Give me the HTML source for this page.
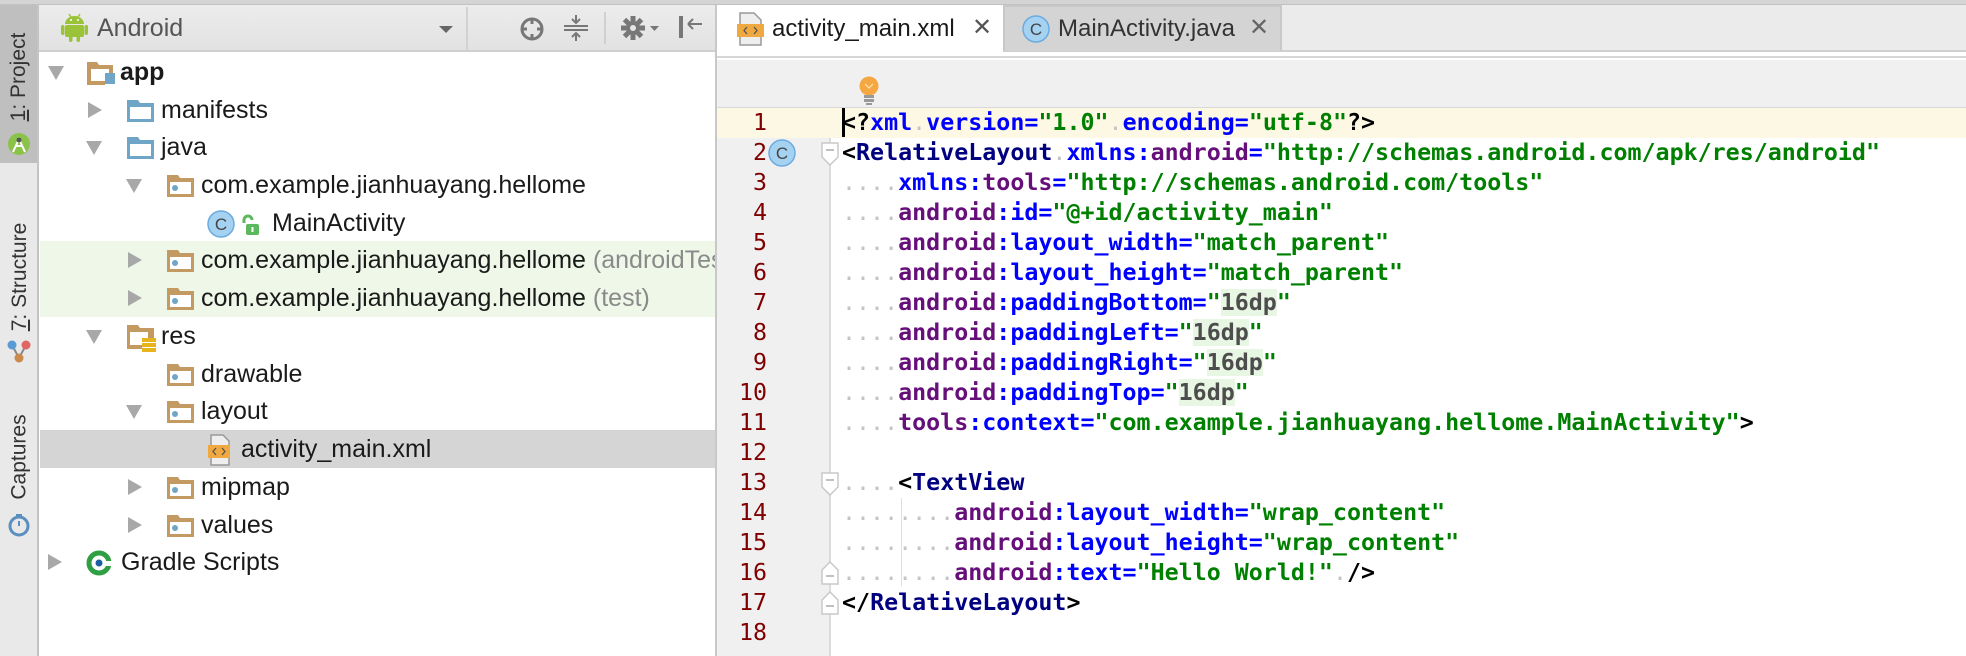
<!DOCTYPE html>
<html><head><meta charset="utf-8"><style>
*{margin:0;padding:0;box-sizing:border-box}
body{width:1966px;height:656px;overflow:hidden;background:#fff;position:relative;font-family:"Liberation Sans","DejaVu Sans",sans-serif}
.abs{position:absolute}
.row{position:absolute;left:40px;width:676px;height:38px;font-size:25px;color:#1a1a1a;line-height:38px;white-space:nowrap;overflow:hidden}
.row .tx{position:absolute;top:0}
.tri{position:absolute;width:0;height:0}
.tri.d{border-left:8px solid transparent;border-right:8px solid transparent;border-top:14px solid #a8a8a8;top:13px}
.tri.r{border-top:8px solid transparent;border-bottom:8px solid transparent;border-left:14px solid #a8a8a8;top:11px}
.code{position:absolute;left:842px;font-family:"DejaVu Sans Mono",monospace;font-size:23.3px;font-weight:bold;line-height:30px;white-space:pre;color:#000}
.ln{position:absolute;left:717px;width:50px;text-align:right;font-family:"DejaVu Sans Mono",monospace;font-size:23.3px;line-height:30px;color:#800000}
.t{color:#000080}.n{color:#660e7a}.a{color:#0000ff}.v{color:#008000}.d{color:#c4c4c4;font-weight:normal}
.g{color:#4d4d4d;background:#e8f6e4}
</style></head><body>
<div class="abs" style="left:0;top:0;width:1966px;height:5px;background:#d4d4d4;border-bottom:1px solid #c2c2c2"></div>
<div class="abs" style="left:0;top:5px;width:39px;height:651px;background:#e9e9e9;border-right:2px solid #c4c4c4"></div>
<div class="abs" style="left:0;top:5px;width:37px;height:158px;background:#bfbfbf"></div>
<div class="abs" style="left:4px;top:30px;width:30px;height:100px;">
 <div style="position:absolute;left:-35px;top:35px;width:100px;transform:rotate(-90deg);font-size:21px;color:#333;text-align:center;white-space:nowrap"><u>1</u>: Project</div></div>
<svg class="abs" style="left:7px;top:132px" width="24" height="24"><circle cx="12" cy="12" r="11" fill="#8bc34a"/><path d="M6 20L12 7L18 20M9 14h6" stroke="#fff" stroke-width="2" fill="none"/><circle cx="12" cy="8" r="2.5" fill="#555"/></svg>
<div class="abs" style="left:-45px;top:265px;width:130px;transform:rotate(-90deg);font-size:21px;color:#333;text-align:center;white-space:nowrap"><u>7</u>: Structure</div>
<svg class="abs" style="left:6px;top:338px" width="26" height="26"><line x1="6" y1="7" x2="13" y2="20" stroke="#888" stroke-width="2"/><line x1="20" y1="7" x2="13" y2="20" stroke="#888" stroke-width="2"/><circle cx="6" cy="7" r="4.5" fill="#5b9bd5"/><circle cx="20" cy="7" r="4.5" fill="#e06666"/><circle cx="13" cy="20" r="4.5" fill="#c98a4b"/></svg>
<div class="abs" style="left:-38px;top:445px;width:115px;transform:rotate(-90deg);font-size:21px;color:#333;text-align:center;white-space:nowrap">Captures</div>
<svg class="abs" style="left:7px;top:512px" width="24" height="26"><circle cx="12" cy="14" r="9" fill="none" stroke="#5b8fbf" stroke-width="3"/><line x1="12" y1="14" x2="12" y2="9" stroke="#5b8fbf" stroke-width="2"/><rect x="9" y="2" width="6" height="3" fill="#5b8fbf"/></svg>

<div class="abs" style="left:39px;top:5px;width:678px;height:47px;background:linear-gradient(#ececec,#e2e2e2);border-bottom:2px solid #cfcfcf"></div>
<div class="abs" style="left:466px;top:7px;width:2px;height:43px;background:#d2d2d2"></div>
<svg class="abs" style="left:61px;top:13px" width="27" height="30"><path d="M4 11a9.5 8 0 0 1 19 0z" fill="#9bc33a"/><rect x="4" y="12" width="19" height="12" rx="2" fill="#9bc33a"/><rect x="0" y="12" width="3.5" height="10" rx="1.7" fill="#9bc33a"/><rect x="23.5" y="12" width="3.5" height="10" rx="1.7" fill="#9bc33a"/><rect x="8" y="22" width="3.5" height="7" rx="1.7" fill="#9bc33a"/><rect x="15.5" y="22" width="3.5" height="7" rx="1.7" fill="#9bc33a"/><line x1="8" y1="1" x2="10" y2="4" stroke="#9bc33a" stroke-width="1.5"/><line x1="19" y1="1" x2="17" y2="4" stroke="#9bc33a" stroke-width="1.5"/><circle cx="10" cy="7" r="1" fill="#fff"/><circle cx="17" cy="7" r="1" fill="#fff"/></svg>
<div class="abs" style="left:97px;top:13px;font-size:25px;color:#555;line-height:30px">Android</div>
<div class="abs" style="left:439px;top:26px;border-left:7px solid transparent;border-right:7px solid transparent;border-top:7px solid #666"></div>
<svg class="abs" style="left:519px;top:16px" width="26" height="26"><circle cx="13" cy="13" r="10" fill="none" stroke="#777" stroke-width="3"/><path d="M13 3v5M13 18v5M3 13h5M18 13h5" stroke="#777" stroke-width="3"/></svg>
<svg class="abs" style="left:563px;top:14px" width="26" height="28"><path d="M1 12h24M1 16h24M13 1v8M9 5l4 4 4-4M13 27v-8M9 23l4-4 4 4" stroke="#777" stroke-width="2" fill="none"/></svg>
<div class="abs" style="left:604px;top:12px;width:2px;height:32px;background:#d0d0d0"></div>
<svg class="abs" style="left:620px;top:15px" width="42" height="26"><g transform="translate(13 13)" fill="#777"><circle r="7"/><g><rect x="-2.5" y="-12" width="5" height="24"/><rect x="-12" y="-2.5" width="24" height="5"/></g><g transform="rotate(45)"><rect x="-2.5" y="-12" width="5" height="24"/><rect x="-12" y="-2.5" width="24" height="5"/></g><circle r="3" fill="#e6e6e6"/></g><path d="M30 11h9l-4.5 5z" fill="#777"/></svg>
<svg class="abs" style="left:678px;top:14px" width="26" height="26"><rect x="1" y="2" width="4" height="22" fill="#777"/><path d="M10 10h14M10 10l5-5M10 10l5 5" stroke="#777" stroke-width="2" fill="none"/></svg>

<div class="abs" style="left:40px;top:241px;width:676px;height:76px;background:#eff7e8"></div>
<div class="abs" style="left:40px;top:430px;width:676px;height:38px;background:#d5d5d5"></div>

<div class="row" style="top:53px"><div class="tri d" style="left:8px"></div>
<svg class="abs" style="left:46px;top:6px" width="32" height="28"><path d="M1 3h10l2 3h14v8h-4v-4H5v12h14v4H1z" fill="#c29a62"/><rect x="19" y="14" width="10" height="11" fill="#6fa6c8"/></svg>
<div class="tx" style="left:80px;font-weight:bold">app</div></div>

<div class="row" style="top:91px"><div class="tri r" style="left:48px"></div>
<svg class="abs" style="left:86px;top:7px" width="30" height="26"><path d="M1 2h11l2 3h14v19H1z" fill="#6fa6c8"/><rect x="4" y="9" width="21" height="12" fill="#fff"/></svg>
<div class="tx" style="left:121px">manifests</div></div>

<div class="row" style="top:128px"><div class="tri d" style="left:46px"></div>
<svg class="abs" style="left:86px;top:7px" width="30" height="26"><path d="M1 2h11l2 3h14v19H1z" fill="#6fa6c8"/><rect x="4" y="9" width="21" height="12" fill="#fff"/></svg>
<div class="tx" style="left:121px">java</div></div>

<div class="row" style="top:166px"><div class="tri d" style="left:86px"></div>
<svg class="abs" style="left:126px;top:7px" width="30" height="26"><path d="M1 2h11l2 3h14v19H1z" fill="#c29a62"/><rect x="4" y="9" width="21" height="12" fill="#fff"/><circle cx="9" cy="15" r="3" fill="#6fa6c8"/></svg>
<div class="tx" style="left:161px">com.example.jianhuayang.hellome</div></div>

<div class="row" style="top:204px">
<svg class="abs" style="left:166px;top:5px" width="30" height="30"><circle cx="15" cy="15" r="13" fill="#a6d2f2" stroke="#6aace0" stroke-width="1.5"/><text x="15" y="21" font-size="17" text-anchor="middle" fill="#444" font-family="Liberation Sans">C</text></svg>
<svg class="abs" style="left:200px;top:10px" width="20" height="22"><path d="M4 9V6a4 4 0 0 1 8 0" fill="none" stroke="#5cb85c" stroke-width="3"/><rect x="6" y="10" width="13" height="11" rx="2" fill="#5cb85c"/><rect x="11.5" y="13" width="2" height="5" fill="#fff"/></svg>
<div class="tx" style="left:232px">MainActivity</div></div>

<div class="row" style="top:241px"><div class="tri r" style="left:88px"></div>
<svg class="abs" style="left:126px;top:7px" width="30" height="26"><path d="M1 2h11l2 3h14v19H1z" fill="#c29a62"/><rect x="4" y="9" width="21" height="12" fill="#fff"/><circle cx="9" cy="15" r="3" fill="#6fa6c8"/></svg>
<div class="tx" style="left:161px">com.example.jianhuayang.hellome <span style="color:#8a8a8a">(androidTest)</span></div></div>

<div class="row" style="top:279px"><div class="tri r" style="left:88px"></div>
<svg class="abs" style="left:126px;top:7px" width="30" height="26"><path d="M1 2h11l2 3h14v19H1z" fill="#c29a62"/><rect x="4" y="9" width="21" height="12" fill="#fff"/><circle cx="9" cy="15" r="3" fill="#6fa6c8"/></svg>
<div class="tx" style="left:161px">com.example.jianhuayang.hellome <span style="color:#8a8a8a">(test)</span></div></div>

<div class="row" style="top:317px"><div class="tri d" style="left:46px"></div>
<svg class="abs" style="left:86px;top:6px" width="34" height="30"><path d="M1 2h11l2 3h14v10h-6V9H4v13h12v4H1z" fill="#c29a62"/><g fill="#e8b41e"><rect x="16" y="15" width="14" height="4"/><rect x="16" y="20" width="14" height="4"/><rect x="16" y="25" width="14" height="4"/></g></svg>
<div class="tx" style="left:121px">res</div></div>

<div class="row" style="top:355px">
<svg class="abs" style="left:126px;top:7px" width="30" height="26"><path d="M1 2h11l2 3h14v19H1z" fill="#c29a62"/><rect x="4" y="9" width="21" height="12" fill="#fff"/><circle cx="9" cy="15" r="3" fill="#6fa6c8"/></svg>
<div class="tx" style="left:161px">drawable</div></div>

<div class="row" style="top:392px"><div class="tri d" style="left:86px"></div>
<svg class="abs" style="left:126px;top:7px" width="30" height="26"><path d="M1 2h11l2 3h14v19H1z" fill="#c29a62"/><rect x="4" y="9" width="21" height="12" fill="#fff"/><circle cx="9" cy="15" r="3" fill="#6fa6c8"/></svg>
<div class="tx" style="left:161px">layout</div></div>

<div class="row" style="top:430px">
<svg class="abs" style="left:168px;top:4px" width="24" height="32"><path d="M3 1h12l6 6v24H3z" fill="#eee" stroke="#999" stroke-width="1.5"/><rect x="0" y="11" width="22" height="13" fill="#f0a840"/><path d="M8 14l-3 3.5 3 3.5M14 14l3 3.5-3 3.5" stroke="#555" stroke-width="1.3" fill="none"/></svg>
<div class="tx" style="left:201px">activity_main.xml</div></div>

<div class="row" style="top:468px"><div class="tri r" style="left:88px"></div>
<svg class="abs" style="left:126px;top:7px" width="30" height="26"><path d="M1 2h11l2 3h14v19H1z" fill="#c29a62"/><rect x="4" y="9" width="21" height="12" fill="#fff"/><circle cx="9" cy="15" r="3" fill="#6fa6c8"/></svg>
<div class="tx" style="left:161px">mipmap</div></div>

<div class="row" style="top:506px"><div class="tri r" style="left:88px"></div>
<svg class="abs" style="left:126px;top:7px" width="30" height="26"><path d="M1 2h11l2 3h14v19H1z" fill="#c29a62"/><rect x="4" y="9" width="21" height="12" fill="#fff"/><circle cx="9" cy="15" r="3" fill="#6fa6c8"/></svg>
<div class="tx" style="left:161px">values</div></div>

<div class="row" style="top:543px"><div class="tri r" style="left:8px"></div>
<svg class="abs" style="left:45px;top:6px" width="28" height="28"><circle cx="14" cy="14" r="10" fill="none" stroke="#2ea043" stroke-width="5"/><circle cx="14" cy="14" r="3.5" fill="#1a5fa0"/><rect x="20" y="12" width="8" height="5" fill="#fff"/></svg>
<div class="tx" style="left:81px">Gradle Scripts</div></div>

<div class="abs" style="left:715px;top:5px;width:2px;height:651px;background:#c8c8c8"></div>

<div class="abs" style="left:717px;top:5px;width:1249px;height:47px;background:#ebebeb;border-bottom:2px solid #cfcfcf"></div>
<div class="abs" style="left:717px;top:5px;width:286px;height:47px;background:#fff"></div>
<svg class="abs" style="left:737px;top:12px" width="30" height="34"><path d="M3 1h14l7 7v25H3z" fill="#eee" stroke="#999" stroke-width="1.5"/><rect x="0" y="12" width="27" height="13" fill="#f0a840"/><path d="M10 15l-3 3.5 3 3.5M17 15l3 3.5-3 3.5" stroke="#555" stroke-width="1.3" fill="none"/></svg>
<div class="abs" style="left:772px;top:14px;font-size:24px;color:#1a1a1a;line-height:30px">activity_main.xml</div>
<div class="abs" style="left:972px;top:13px;font-size:24px;color:#555;line-height:30px">✕</div>
<div class="abs" style="left:1003px;top:5px;width:279px;height:46px;background:#d4d4d4;border:2px solid #c8c8c8;border-bottom:none"></div>
<svg class="abs" style="left:1021px;top:14px" width="30" height="30"><circle cx="15" cy="15" r="13" fill="#a6d2f2" stroke="#6aace0" stroke-width="1.5"/><text x="15" y="21" font-size="17" text-anchor="middle" fill="#444" font-family="Liberation Sans">C</text></svg>
<div class="abs" style="left:1058px;top:14px;font-size:24px;color:#333;line-height:30px">MainActivity.java</div>
<div class="abs" style="left:1249px;top:13px;font-size:24px;color:#666;line-height:30px">✕</div>

<div class="abs" style="left:717px;top:52px;width:1249px;height:6px;background:#fff;border-bottom:2px solid #d6d6d6"></div>
<div class="abs" style="left:717px;top:60px;width:1249px;height:48px;background:#f0f0f0;border-bottom:1px solid #d8d8d8"></div>
<svg class="abs" style="left:858px;top:76px" width="22" height="32"><circle cx="11" cy="10" r="9.5" fill="#f5a742"/><path d="M7 8l4 4 4-4" stroke="#fde0a8" stroke-width="1.3" fill="none"/><rect x="6" y="19" width="10" height="3" fill="#999"/><rect x="6" y="23" width="10" height="3" fill="#999"/><rect x="8" y="27" width="6" height="2" fill="#999"/></svg>

<div class="abs" style="left:717px;top:108px;width:113px;height:548px;background:#f0f0f0"></div>
<div class="abs" style="left:830px;top:108px;width:1136px;height:548px;background:#fff"></div>
<div class="abs" style="left:829px;top:108px;width:2px;height:548px;background:#dcdcdc"></div>
<div class="abs" style="left:717px;top:108px;width:1249px;height:30px;background:#fdf8e4"></div>
<div class="abs" style="left:842px;top:108px;width:3px;height:29px;background:#000"></div>

<div class="ln" style="top:108px">1</div><div class="ln" style="top:138px">2</div><div class="ln" style="top:168px">3</div><div class="ln" style="top:198px">4</div><div class="ln" style="top:228px">5</div><div class="ln" style="top:258px">6</div><div class="ln" style="top:288px">7</div><div class="ln" style="top:318px">8</div><div class="ln" style="top:348px">9</div><div class="ln" style="top:378px">10</div><div class="ln" style="top:408px">11</div><div class="ln" style="top:438px">12</div><div class="ln" style="top:468px">13</div><div class="ln" style="top:498px">14</div><div class="ln" style="top:528px">15</div><div class="ln" style="top:558px">16</div><div class="ln" style="top:588px">17</div><div class="ln" style="top:618px">18</div>

<svg class="abs" style="left:768px;top:139px" width="30" height="30"><circle cx="14" cy="14" r="13" fill="#a6d2f2" stroke="#6aace0" stroke-width="1.5"/><text x="14" y="20" font-size="17" text-anchor="middle" fill="#444" font-family="Liberation Sans">C</text></svg>

<svg class="abs" style="left:821px;top:142px" width="18" height="24"><path d="M1 1h16v14l-8 8-8-8z" fill="#fff" stroke="#c8c8c8" stroke-width="1.5"/><line x1="5" y1="8" x2="13" y2="8" stroke="#aaa" stroke-width="1.5"/></svg>
<svg class="abs" style="left:821px;top:472px" width="18" height="24"><path d="M1 1h16v14l-8 8-8-8z" fill="#fff" stroke="#c8c8c8" stroke-width="1.5"/><line x1="5" y1="8" x2="13" y2="8" stroke="#aaa" stroke-width="1.5"/></svg>
<svg class="abs" style="left:821px;top:561px" width="18" height="24"><path d="M1 23h16V9L9 1 1 9z" fill="#fff" stroke="#c8c8c8" stroke-width="1.5"/><line x1="5" y1="15" x2="13" y2="15" stroke="#aaa" stroke-width="1.5"/></svg>
<svg class="abs" style="left:821px;top:591px" width="18" height="24"><path d="M1 23h16V9L9 1 1 9z" fill="#fff" stroke="#c8c8c8" stroke-width="1.5"/><line x1="5" y1="15" x2="13" y2="15" stroke="#aaa" stroke-width="1.5"/></svg>
<div class="abs" style="left:901px;top:498px;width:1px;height:88px;background:#dedede"></div>

<div class="code" style="top:108px">&lt;?<span class="a">xml</span><span class="d">.</span><span class="a">version</span><span class="a">=</span><span class="v">"1.0"</span><span class="d">.</span><span class="a">encoding</span><span class="a">=</span><span class="v">"utf-8"</span>?&gt;</div>
<div class="code" style="top:138px">&lt;<span class="t">RelativeLayout</span><span class="d">.</span><span class="a">xmlns</span><span class="a">:</span><span class="n">android</span><span class="a">=</span><span class="v">"http://schemas.android.com/apk/res/android"</span></div>
<div class="code" style="top:168px"><span class="d">....</span><span class="a">xmlns</span><span class="a">:</span><span class="n">tools</span><span class="a">=</span><span class="v">"http://schemas.android.com/tools"</span></div>
<div class="code" style="top:198px"><span class="d">....</span><span class="n">android</span><span class="a">:id=</span><span class="v">"@+id/activity_main"</span></div>
<div class="code" style="top:228px"><span class="d">....</span><span class="n">android</span><span class="a">:layout_width=</span><span class="v">"match_parent"</span></div>
<div class="code" style="top:258px"><span class="d">....</span><span class="n">android</span><span class="a">:layout_height=</span><span class="v">"match_parent"</span></div>
<div class="code" style="top:288px"><span class="d">....</span><span class="n">android</span><span class="a">:paddingBottom=</span><span class="v">"</span><span class="g">16dp</span><span class="v">"</span></div>
<div class="code" style="top:318px"><span class="d">....</span><span class="n">android</span><span class="a">:paddingLeft=</span><span class="v">"</span><span class="g">16dp</span><span class="v">"</span></div>
<div class="code" style="top:348px"><span class="d">....</span><span class="n">android</span><span class="a">:paddingRight=</span><span class="v">"</span><span class="g">16dp</span><span class="v">"</span></div>
<div class="code" style="top:378px"><span class="d">....</span><span class="n">android</span><span class="a">:paddingTop=</span><span class="v">"</span><span class="g">16dp</span><span class="v">"</span></div>
<div class="code" style="top:408px"><span class="d">....</span><span class="n">tools</span><span class="a">:context=</span><span class="v">"com.example.jianhuayang.hellome.MainActivity"</span>&gt;</div>
<div class="code" style="top:468px"><span class="d">....</span>&lt;<span class="t">TextView</span></div>
<div class="code" style="top:498px"><span class="d">........</span><span class="n">android</span><span class="a">:layout_width=</span><span class="v">"wrap_content"</span></div>
<div class="code" style="top:528px"><span class="d">........</span><span class="n">android</span><span class="a">:layout_height=</span><span class="v">"wrap_content"</span></div>
<div class="code" style="top:558px"><span class="d">........</span><span class="n">android</span><span class="a">:text=</span><span class="v">"Hello World!"</span><span class="d">.</span>/&gt;</div>
<div class="code" style="top:588px">&lt;/<span class="t">RelativeLayout</span>&gt;</div>
</body></html>
